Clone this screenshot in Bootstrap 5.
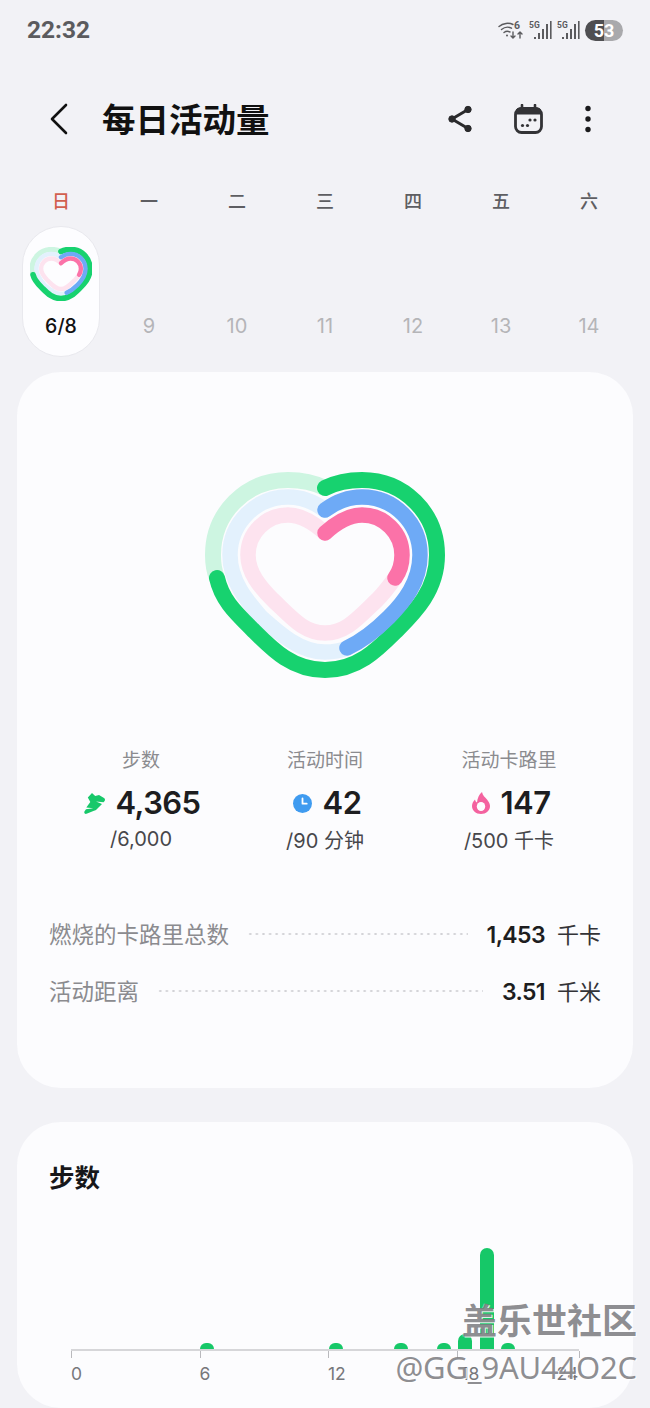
<!DOCTYPE html>
<html lang="zh">
<head>
  <meta charset="UTF-8" />
  <title>每日活动量</title>
  <meta name="viewport" content="width=device-width, initial-scale=1">
  <link href="https://cdn.jsdelivr.net/npm/bootstrap@5.3.3/dist/css/bootstrap.min.css" rel="stylesheet">
  <style>
    body { background: #f2f2f6; font-family: Inter, "Noto Sans CJK SC", sans-serif; color: #1d1d20; }
    .phone { width: 650px; height: 1408px; overflow: hidden; position: relative; }
    .status-bar { height: 60px; padding: 0 27px; }
    .clock { font-size: 24.5px; font-weight: 700; color: #5b5b5e; font-family: Roboto, sans-serif; }
    .status-icons { gap: 5px; }
    .batt { width: 38px; height: 21px; border-radius: 11px; background: linear-gradient(90deg, #4f4f52 50%, #a9a9ac 50%); color: #fff; font-size: 18px; line-height: 21px; font-weight: 700; text-align: center; font-family: Roboto, sans-serif; }
    .app-bar { height: 60px; margin-top: 30px; padding: 0 58px 0 50px; }
    .page-title { font-size: 33.5px; font-weight: 700; color: #111; margin: 0 0 0 34px; line-height: 60px; }
    .app-icon { margin-bottom: 3px; }
    .cal-icon { margin: 0 41px 3px 41px; }
    .week { display: grid; grid-template-columns: repeat(7, 88px); padding: 0 17px; text-align: center; }
    .week-head { margin-top: 37px; height: 30px; line-height: 30px; font-size: 18px; font-weight: 500; color: #5e5e62; }
    .sun { color: #d2604f; }
    .week-days { margin-top: 9px; height: 131px; font-size: 20px; color: #b5b5b8; }
    .day-cell { display: flex; flex-direction: column; align-items: center; justify-content: flex-end; padding-bottom: 16px; }
    .day-pill { width: 78px; height: 131px; margin: 0 auto; padding: 20px 0 0; border-radius: 39px; background: #fdfdff; border: 1px solid #e9e9ee; color: #111; font-weight: 500; font-size: 19.5px; line-height: 24px; }
    .day-pill svg { display: block; margin: 0 auto 13px; }
    .panel { margin: 15px 17px 0; background: #fcfcfe; border-radius: 44px; padding: 100px 32px 0; height: 716px; }
    .panel-steps { margin-top: 34px; height: 286px; padding: 41px 32px 0; }
    .stats { display: grid; grid-template-columns: repeat(3, 184px); margin-top: 71px; text-align: center; }
    .stat-label { font-size: 19px; line-height: 24px; color: #8b8b8f; }
    .stat-val { margin-top: 10px; height: 40px; padding-left: 4px; gap: 11px; font-size: 31px; line-height: 40px; font-weight: 600; letter-spacing: -.6px; }
    .stat-first { padding-left: 2px; gap: 10px; }
    .stat-goal { font-size: 20px; line-height: 28px; color: #47474b; margin-top: 2px; }
    .stat-goal-cjk { margin-top: 4px; }
    .summary { margin-top: 63px; }
    .sum-row { height: 34px; margin-bottom: 23px; font-size: 22.5px; color: #8b8b8f; }
    .leader { height: 4px; margin: 0 19px 3px 18px; background: radial-gradient(circle, #d2d2d6 1px, transparent 1.2px) 0 0 / 6.6px 4px repeat-x; }
    .sum-val { font-size: 23px; font-weight: 600; color: #1d1d20; letter-spacing: -.6px; }
    .sum-unit { font-size: 22px; color: #333337; margin-left: 12px; }
    .steps-title { font-size: 25.5px; line-height: 30px; font-weight: 700; color: #17171a; margin: 0; }
    .bars { display: grid; grid-template-columns: repeat(24, 21.5px); align-items: end; height: 156px; margin-left: 22px; width: 508px; }
    .bar { width: 14px; background: #16c868; border-radius: 7px 7px 0 0; }
    .axis { display: flex; width: 508px; margin-left: 22px; border-top: 2px solid #d6d6d9; font-size: 17.5px; line-height: 20px; color: #77777b; }
    .tick { flex: 0 0 128.5px; }
    .tick::before { content: ""; display: block; width: 1px; height: 7px; background: #b9b9bd; margin-bottom: 6px; }
    .tick-short { flex-basis: 122px; }
    .tick-end { flex: 0 0 1px; white-space: nowrap; }
    .tick-end span { display: block; margin-left: -22px; }
    .tick-shift { padding-left: 5px; display: block; }
    .watermark { position: absolute; right: 13px; top: 1297px; text-align: right; color: rgba(105, 105, 110, .75); text-shadow: 1px 1px 0 rgba(255, 255, 255, .85), -1px 0 0 rgba(255, 255, 255, .45); pointer-events: none; }
    .wm-big { font-size: 35px; line-height: 48px; font-weight: 700; }
    .wm-small { font-size: 31px; line-height: 34px; margin-top: 5px; font-family: "Noto Sans", sans-serif; letter-spacing: -.2px; }
    /* heart bands, shared by the big ring and the one in the day pill */
    .arc { fill: none; stroke-linecap: round; }
    .lt-green { stroke: #cdf5e1; } .lt-blue { stroke: #e3f1fd; } .lt-pink { stroke: #fde3ef; }
    .dk-green { stroke: #17d26f; } .dk-blue { stroke: #6eaaf6; } .dk-pink { stroke: #fb72a8; }
  </style>
</head>
<body>
  <svg width="0" height="0" class="position-absolute">
    <defs>
      <path id="bg1" d="M325 488C313 482 301 480 288 480C246 480 213 513 213 555C213 563 214 571 217 578"/>
      <path id="bg2" d="M325 510C313 501 301 497 288 497C256 497 230 523 230 555C230 582 248 602 261 617C280 634 300 652 325 652C332 652 340 651 347 648"/>
      <path id="bg3" d="M325 533C313 522 301 515 288 515C266 515 248 533 248 555C248 573 260 587 273 600C292 618 304 633 325 633C346 633 358 618 377 600C384 593 390 585 395 578"/>
      <path id="fg1" d="M325 488C337 482 349 480 362 480C404 480 437 513 437 555C437 590 415 612 397 630C378 649 358 670 325 670C292 670 272 649 253 630C235 612 222 600 217 578"/>
      <path id="fg2" d="M325 510C337 501 349 497 362 497C394 497 420 523 420 555C420 582 404 602 389 617C376 630 362 641 347 648"/>
      <path id="fg3" d="M325 533C337 522 349 515 362 515C384 515 402 533 402 555C402 564 400 571 395 578"/>
    </defs>
  </svg>

  <div class="phone">
    <div class="status-bar d-flex align-items-center justify-content-between">
      <span class="clock">22:32</span>
      <div class="status-icons d-flex align-items-center">
        <svg width="26" height="20" viewBox="0 0 26 20" fill="none" stroke="#5b5b5e" stroke-width="1.4" stroke-linecap="round">
          <path d="M1 6.5C5 3 11 2.5 15 4.5"/><path d="M3.5 9.5C6.5 7 10.5 6.7 13.5 8.2"/><path d="M6 12.5C8 11 10 11 12 12"/>
          <circle cx="9" cy="15.5" r="1" fill="#5b5b5e" stroke="none"/>
          <text x="16" y="9" font-size="10.5" font-weight="700" fill="#5b5b5e" stroke="none" font-family="Roboto, sans-serif">6</text>
          <path d="M15 12v6M13 16l2 2 2-2M22 18v-6M20 14l2-2 2 2"/>
        </svg>
        <svg width="23" height="20" viewBox="0 0 23 20" fill="#5b5b5e">
          <text x="0" y="7.5" font-size="8.5" font-weight="700" font-family="Roboto, sans-serif">5G</text>
          <rect x="5" y="17" width="2" height="2"/><rect x="9" y="13" width="2" height="6"/><rect x="13" y="9" width="2" height="10"/><rect x="17" y="4" width="2" height="15"/><rect x="21" y="1" width="1.6" height="18"/>
        </svg>
        <svg width="23" height="20" viewBox="0 0 23 20" fill="#5b5b5e">
          <text x="0" y="7.5" font-size="8.5" font-weight="700" font-family="Roboto, sans-serif">5G</text>
          <rect x="5" y="17" width="2" height="2"/><rect x="9" y="13" width="2" height="6"/><rect x="13" y="9" width="2" height="10"/><rect x="17" y="4" width="2" height="15"/><rect x="21" y="1" width="1.6" height="18"/>
        </svg>
        <div class="batt">53</div>
      </div>
    </div>

    <div class="app-bar d-flex align-items-center">
      <svg class="app-icon" width="18" height="32" viewBox="0 0 18 32" fill="none" stroke="#111" stroke-width="2.6" stroke-linecap="round" stroke-linejoin="round"><path d="M16 2L2 16l14 14"/></svg>
      <h1 class="page-title flex-grow-1">每日活动量</h1>
      <svg class="app-icon" width="26" height="28" viewBox="0 0 26 28" fill="#2a2a2c" stroke="#2a2a2c">
        <path d="M21 4.5L5 14l16 9.5" fill="none" stroke-width="3"/><circle cx="21" cy="4.5" r="3.2"/><circle cx="5" cy="14" r="3.2"/><circle cx="21" cy="23.5" r="3.2"/>
      </svg>
      <svg class="cal-icon" width="29" height="30" viewBox="0 0 29 30" fill="none" stroke="#333336">
        <rect x="1.5" y="4.5" width="26" height="24" rx="6" stroke-width="2.8"/>
        <path d="M2 10h25V8a4 4 0 0 0-4-4H6a4 4 0 0 0-4 4z" fill="#333336"/>
        <path d="M8 1v5M21 1v5" stroke-width="2.6" stroke-linecap="round"/>
        <g fill="#333336" stroke="none"><circle cx="16" cy="16" r="1.6"/><circle cx="21" cy="16" r="1.6"/><circle cx="8.5" cy="21.5" r="1.6"/><circle cx="13.5" cy="21.5" r="1.6"/></g>
      </svg>
      <svg class="app-icon" width="8" height="28" viewBox="0 0 8 28" fill="#1a1a1c"><circle cx="4" cy="3.5" r="2.7"/><circle cx="4" cy="14" r="2.7"/><circle cx="4" cy="24.5" r="2.7"/></svg>
    </div>

    <div class="week week-head">
      <span class="sun">日</span><span>一</span><span>二</span><span>三</span><span>四</span><span>五</span><span>六</span>
    </div>
    <div class="week week-days">
      <div class="day-pill">
        <svg width="62" height="54" viewBox="205 472 240 206">
          <g class="arc">
            <use href="#bg1" class="lt-green" stroke-width="20"/>
            <use href="#bg2" class="lt-blue" stroke-width="17"/>
            <use href="#bg3" class="lt-pink" stroke-width="17"/>
            <use href="#fg1" class="dk-green" stroke-width="22"/>
            <use href="#fg2" class="dk-blue" stroke-width="17"/>
            <use href="#fg3" class="dk-pink" stroke-width="17"/>
          </g>
        </svg>
        6/8
      </div>
      <div class="day-cell">9</div><div class="day-cell">10</div><div class="day-cell">11</div><div class="day-cell">12</div><div class="day-cell">13</div><div class="day-cell">14</div>
    </div>

    <div class="panel">
      <svg class="d-block mx-auto" width="240" height="206" viewBox="205 472 240 206">
        <g class="arc">
          <use href="#bg1" class="lt-green" stroke-width="16"/>
          <use href="#bg2" class="lt-blue" stroke-width="15.5"/>
          <use href="#bg3" class="lt-pink" stroke-width="15.5"/>
          <use href="#fg1" class="dk-green" stroke-width="16"/>
          <use href="#fg2" class="dk-blue" stroke-width="15.5"/>
          <use href="#fg3" class="dk-pink" stroke-width="15.5"/>
        </g>
      </svg>

      <div class="stats">
        <div>
          <div class="stat-label">步数</div>
          <div class="stat-val stat-first d-flex align-items-center justify-content-center">
            <svg width="22" height="21" viewBox="0 0 22 21"><path d="M8 0l3.2 3 3.8-1 5 3c1.4 1 1.2 2.6.2 3.6l-.7.7-7.5-.8 6 2.5L13 16c-1 1-1.8 1.5-3 1.8L2.500 20.800C.8 21.300-.4 19.500.6 18.200l1.400-2 7.300-1-7-.7L6.300 9 3.800 4.500z" fill="#17c86a"/></svg>
            <span>4,365</span>
          </div>
          <div class="stat-goal">/6,000</div>
        </div>
        <div>
          <div class="stat-label">活动时间</div>
          <div class="stat-val d-flex align-items-center justify-content-center">
            <svg width="19" height="19" viewBox="0 0 19 19"><circle cx="9.5" cy="9.5" r="9.5" fill="#3f9bf0"/><path d="M9.5 4.5v5.2h4.2" fill="none" stroke="#fff" stroke-width="1.8" stroke-linecap="round" stroke-linejoin="round"/></svg>
            <span>42</span>
          </div>
          <div class="stat-goal stat-goal-cjk">/90 分钟</div>
        </div>
        <div>
          <div class="stat-label">活动卡路里</div>
          <div class="stat-val d-flex align-items-center justify-content-center">
            <svg width="18" height="22" viewBox="0 0 18 22"><path d="M10 0c.5 3.5 3 5 5 7.5 1.8 2.3 3 4.5 3 6.5 0 4.5-4 8-9 8s-9-3.500-9-8c0-2.500 1.200-4.800 3-6.500.3 1.500 1 2.500 2 3C5.500 6 7 2.500 10 0z" fill="#f4629f"/><ellipse cx="9" cy="14.5" rx="4.2" ry="4.5" fill="#fdfdff"/></svg>
            <span>147</span>
          </div>
          <div class="stat-goal stat-goal-cjk">/500 千卡</div>
        </div>
      </div>

      <div class="summary">
        <div class="sum-row d-flex align-items-center">
          <span>燃烧的卡路里总数</span><div class="leader flex-grow-1"></div>
          <span class="sum-val">1,453</span><span class="sum-unit">千卡</span>
        </div>
        <div class="sum-row d-flex align-items-center">
          <span>活动距离</span><div class="leader flex-grow-1"></div>
          <span class="sum-val">3.51</span><span class="sum-unit">千米</span>
        </div>
      </div>
    </div>

    <div class="panel panel-steps">
      <h2 class="steps-title">步数</h2>
      <div class="bars">
        <div class="bar" style="grid-column:7;height:6px"></div>
        <div class="bar" style="grid-column:13;height:6px"></div>
        <div class="bar" style="grid-column:16;height:6px"></div>
        <div class="bar" style="grid-column:18;height:6px"></div>
        <div class="bar" style="grid-column:19;height:15px"></div>
        <div class="bar" style="grid-column:20;height:101px"></div>
        <div class="bar" style="grid-column:21;height:6px"></div>
      </div>
      <div class="axis">
        <div class="tick">0</div>
        <div class="tick">6</div>
        <div class="tick">12</div>
        <div class="tick tick-short"><span class="tick-shift">18</span></div>
        <div class="tick tick-end"><span>24</span></div>
      </div>
    </div>

    <div class="watermark">
      <div class="wm-big">盖乐世社区</div>
      <div class="wm-small">@GG_9AU44O2C</div>
    </div>
  </div>

  <script src="https://cdn.jsdelivr.net/npm/bootstrap@5.3.3/dist/js/bootstrap.bundle.min.js"></script>
</body>
</html>
